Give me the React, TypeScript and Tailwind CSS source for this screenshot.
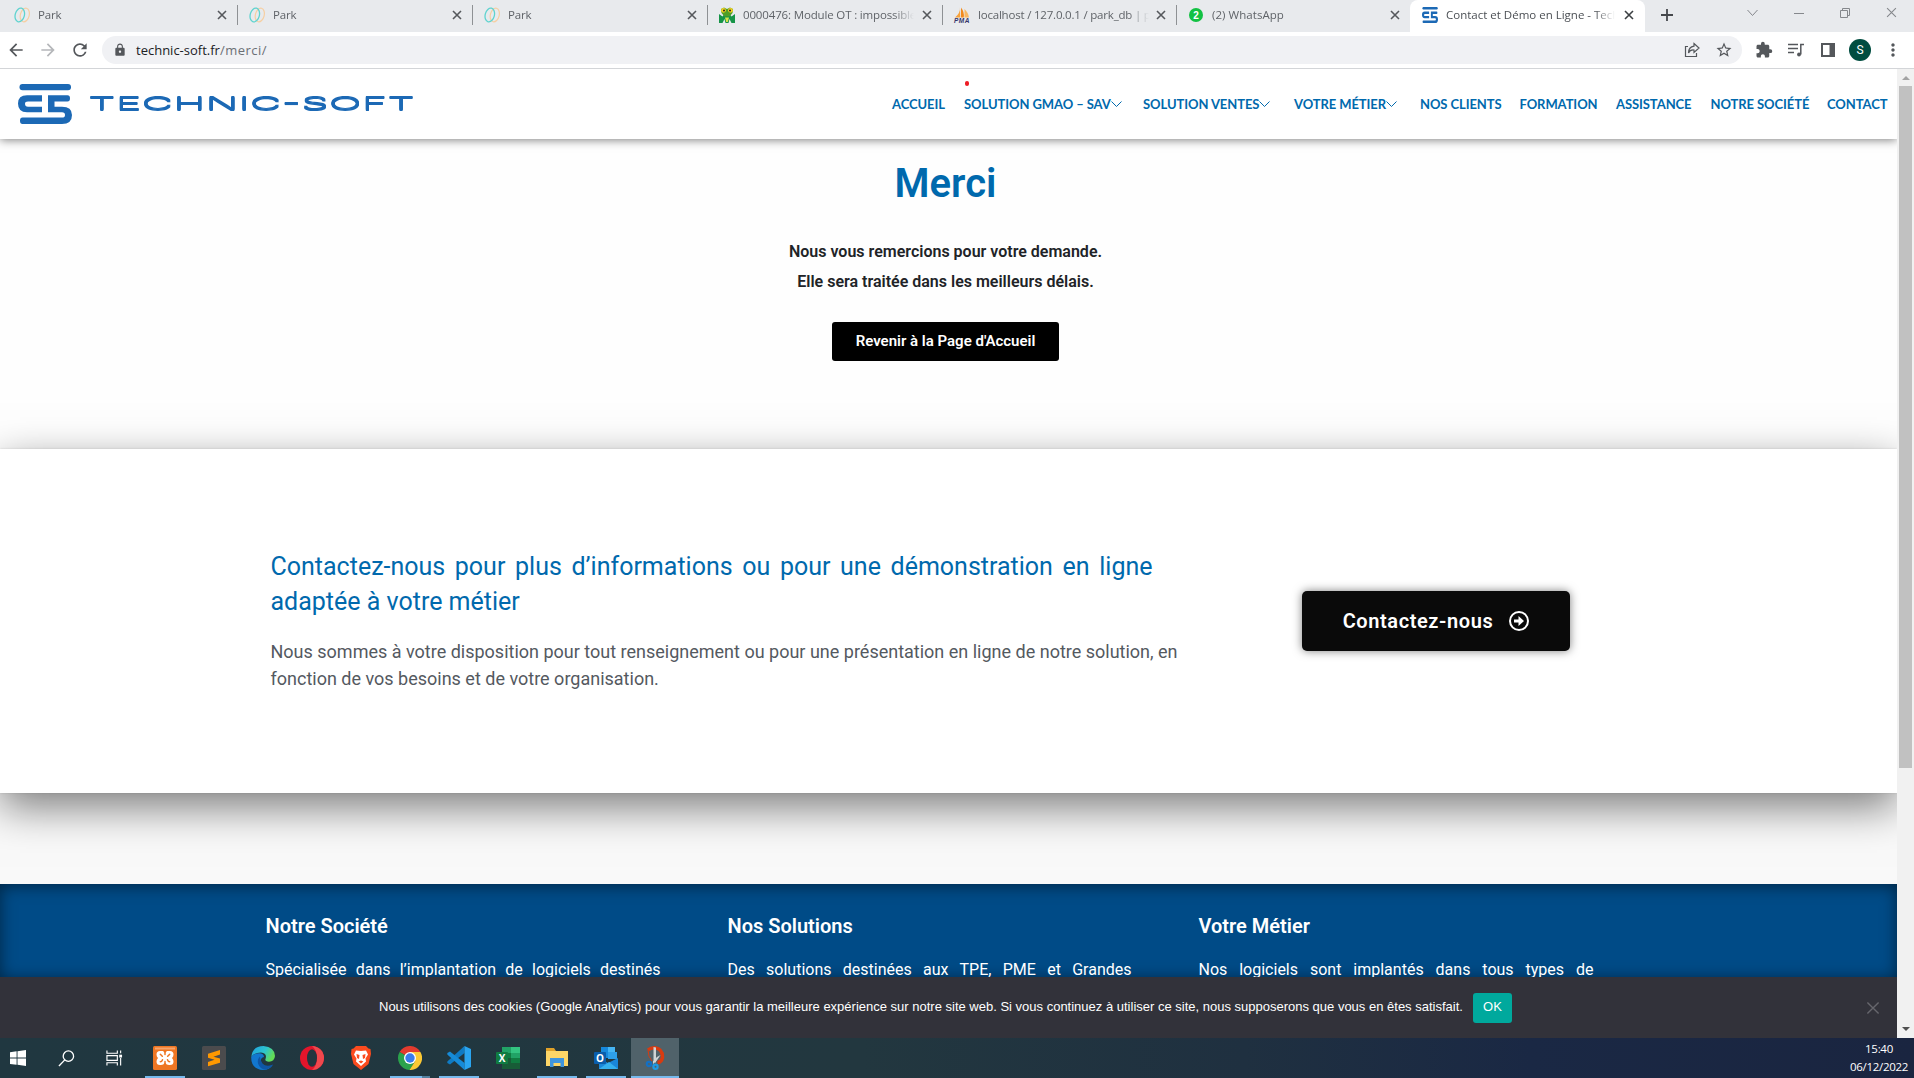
import React from "react";
import { MdArrowBack, MdArrowForward, MdRefresh, MdLock, MdStarOutline, MdExtension, MdMoreVert } from "react-icons/md";

const roboto = "font-[Roboto,sans-serif]";

function X({ className = "" }: { className?: string }) {
  return (
    <svg className={className} viewBox="0 0 10 10" fill="none" stroke="currentColor">
      <path d="M1 1l8 8M9 1l-8 8" />
    </svg>
  );
}

function Mark({ className = "", color = "#1c69b5" }: { className?: string; color?: string }) {
  return (
    <svg className={className} viewBox="0 0 54 40" preserveAspectRatio="none" fill={color}>
      <rect x="1.5" y="0" width="51.5" height="6.3" rx="3" />
      <path d="M24 11.2H9Q0 11.2 0 19.5Q0 28.200 9 28.200H24V22.700H10Q7 22.700 7 19.700Q7 17.400 10 17.400H24Z" />
      <path d="M30 11.200H49.500Q52 11.200 52 14.200Q52 17.400 49.500 17.400H36.500V22.700H44Q54 22.700 54 31Q54 40 44 40H4.500Q2 40 2 36.800Q2 33.600 4.500 33.600H44Q47 33.600 47 31Q47 28.200 44 28.200H30Z" />
    </svg>
  );
}

function ParkIcon() {
  return (
    <svg viewBox="0 0 16 16" className="size-4" fill="none">
      <ellipse cx="10.800" cy="8" rx="4.400" ry="7" transform="rotate(14 10.800 8)" stroke="#f6cfa2" strokeWidth="1.200" />
      <ellipse cx="5.800" cy="8" rx="4.600" ry="7" transform="rotate(14 5.800 8)" stroke="#5fd3cf" strokeWidth="1.300" />
    </svg>
  );
}

function MantisIcon() {
  return (
    <svg viewBox="0 0 16 16" className="size-4">
      <path d="M0 7l3.500 2.500L5 7.500h6l1.500 2L16 7v9h-3.500l-2-4-1 4h-3l-1-4-2 4H0Z" fill="#159447" />
      <path d="M2 2l3-1.500 3 1.500 3-1.500L14 2l-.5 4-3 3.500h-5L2.500 6Z" fill="#4f9e26" />
      <circle cx="4.500" cy="3.300" r="2.400" fill="#f4d21f" />
      <circle cx="11.500" cy="3.300" r="2.400" fill="#f4d21f" />
      <circle cx="5" cy="3.500" r="1" fill="#222" />
      <circle cx="11" cy="3.500" r="1" fill="#222" />
      <path d="M6 10.500h4L8.800 15H7.200Z" fill="#d8e34a" />
    </svg>
  );
}

function PmaIcon() {
  return (
    <svg viewBox="0 0 16 16" className="size-4 overflow-visible">
      <path d="M6 0Q6.500 6 1 10.500H6Z" fill="#f7a23b" />
      <path d="M7 .5Q10.500 5 9.800 10.500H6.800Z" fill="#f28a1c" />
      <path d="M10.500 2Q14.500 6 15 10.500h-4.500Z" fill="#f9b862" />
      <text x="0" y="15.800" fontSize="6.500" fontWeight="700" fontStyle="italic" fontFamily="Liberation Sans" fill="#35356b" textLength="15.500">PMA</text>
    </svg>
  );
}

function WhatsIcon() {
  return (
    <span className="flex h-[14px] w-[14px] items-center justify-center rounded-full bg-[#12c143] font-['Liberation_Sans',sans-serif] text-[10px] font-bold text-white">2</span>
  );
}

const tabs = [
  { t: "Park", i: <ParkIcon />, w: "w-[238px]" },
  { t: "Park", i: <ParkIcon />, w: "w-[235px]" },
  { t: "Park", i: <ParkIcon />, w: "w-[235px]" },
  { t: "0000476: Module OT : impossible", i: <MantisIcon />, w: "w-[235px]" },
  { t: "localhost / 127.0.0.1 / park_db | p", i: <PmaIcon />, w: "w-[234px]" },
  { t: "(2) WhatsApp", i: <WhatsIcon />, w: "w-[233px]" },
];

function TabBar() {
  return (
    <div className="flex h-8 bg-[#e8eaed] font-['Open_Sans',sans-serif] text-[11.5px] text-[#5f6368]">
      {tabs.map((tab, n) => (
        <div key={n} className={`flex h-[30px] shrink-0 items-center ${n === 0 ? "pl-[14px]" : "pl-[11px]"} ${tab.w}`}>
          <span className="flex w-4 justify-center">{tab.i}</span>
          <span className={`ml-2 w-[171px] overflow-hidden whitespace-nowrap [mask-image:linear-gradient(to_right,#000_88%,transparent)] ${n === 4 ? "tracking-[-0.2px]" : n === 5 ? "tracking-[0.05px]" : "tracking-[-0.15px]"}`}>{tab.t}</span>
          <X className={`size-[10px] stroke-[1.6] text-[#55585c] ${n > 3 ? "ml-[7px]" : "ml-[8px]"}`} />
          <span className={`ml-auto h-5 w-px ${n < 5 ? "bg-[#8e9194]" : ""}`} />
        </div>
      ))}
      <div className="flex w-[235px] shrink-0 items-center rounded-t-[8px] bg-white pb-[2px] pl-[12px]">
        <Mark className="h-4 w-4" />
        <span className="ml-2 w-[169px] overflow-hidden whitespace-nowrap text-[#4b4f54] [mask-image:linear-gradient(to_right,#000_88%,transparent)]">Contact et Démo en Ligne - Technic</span>
        <X className="ml-[9px] size-[10px] stroke-[1.6] text-[#3c4043]" />
      </div>
      <svg className="ml-[15px] mt-[8px] size-[14px]" viewBox="0 0 14 14" stroke="#45484c" strokeWidth="1.800"><path d="M7 1v12M1 7h12" /></svg>
      <div className="ml-auto flex h-[25px] items-center text-[#85888c]">
        <svg className="mr-[36px] h-[10px] w-[11px]" viewBox="0 0 11 10" fill="none" stroke="currentColor"><path d="M.5 2l5 5.500 5-5.500" /></svg>
        <svg className="mr-[36px] h-[10px] w-[10px]" viewBox="0 0 10 10" stroke="currentColor"><path d="M0 5.500h10" /></svg>
        <svg className="mr-[36px] h-[10px] w-[10px]" viewBox="0 0 10 10" fill="none" stroke="currentColor"><path d="M.5 2.500h7v7h-7zM2.500 2.500v-2h7v7h-2" /></svg>
        <X className="mr-[17px] size-[11px]" />
      </div>
    </div>
  );
}

function Toolbar() {
  return (
    <div className="flex h-[37px] items-center border-b border-[#d3d5d8] bg-white text-[#54575b]">
      <MdArrowBack className="ml-[6px] size-5" />
      <MdArrowForward className="ml-3 size-5 text-[#b5b7ba]" />
      <MdRefresh className="ml-3 size-5" />
      <div className="ml-[12px] flex h-7 w-[1640px] items-center rounded-full bg-[#f0f1f4] font-['Open_Sans',sans-serif] text-[13px]">
        <MdLock className="ml-[11px] size-[14px]" />
        <span className="ml-[9px] pt-px tracking-[0.5px] text-[#6b6f74]"><span className="tracking-[0px] text-[#202124]">technic-soft.fr</span>/merci/</span>
        <svg className="ml-auto mr-[15px] size-4" viewBox="0 0 16 16" fill="none" stroke="currentColor" strokeWidth="1.200">
          <path d="M4 4.500H1.500v10h11V11" /><path d="M10 1.500l5 4.500-5 4.500V8Q6 7.500 4.500 11Q4.500 5 10 4.200Z" />
        </svg>
        <MdStarOutline className="mr-[9px] size-[18px]" />
      </div>
      <MdExtension className="ml-[13px] size-[18px]" />
      <svg className="ml-[15px] h-[14px] w-[16px]" viewBox="0 0 16 14" fill="none" stroke="currentColor" strokeWidth="1.500">
        <path d="M0 1.500h10M0 5.500h10M0 9.500h6M12.800 11.500V1.500H16" /><circle cx="11" cy="11.500" r="1.900" fill="currentColor" stroke="none" />
      </svg>
      <svg className="ml-[17px] h-[14px] w-[14px]" viewBox="0 0 14 14" fill="none" stroke="currentColor" strokeWidth="2">
        <path d="M1 1h12v12H1z" /><path d="M8.500 1h4.500v12H8.500z" fill="currentColor" stroke="none" />
      </svg>
      <span className="ml-[14px] flex size-[22px] items-center justify-center rounded-full bg-[#004d40] font-[Roboto,sans-serif] text-[12px] text-white">S</span>
      <MdMoreVert className="ml-[12px] size-5" />
    </div>
  );
}

const nav = [
  { t: "ACCUEIL", w: "w-[72px]" },
  { t: "SOLUTION GMAO – SAV", w: "w-[179px]", c: true },
  { t: "SOLUTION VENTES", w: "w-[151px]", c: true },
  { t: "VOTRE MÉTIER", w: "w-[126px]", c: true },
  { t: "NOS CLIENTS", w: "w-[99.500px]" },
  { t: "FORMATION", w: "w-[96.500px]" },
  { t: "ASSISTANCE", w: "w-[94.500px]" },
  { t: "NOTRE SOCIÉTÉ", w: "w-[116.500px]" },
  { t: "CONTACT", w: "w-[70px]" },
];

function Header() {
  return (
    <header className="relative z-20 flex h-[70px] shrink-0 items-center bg-white shadow-[0_1px_9px_rgba(0,0,0,0.5)]">
      <Mark className="ml-[18px] h-[40px] w-[54px]" />
      <svg className="ml-[18px] h-[24px] w-[324px] overflow-visible [filter:drop-shadow(0_1px_0_#1c69b5)_drop-shadow(0_-1px_0_#1c69b5)]" viewBox="0 0 324 24">
        <text x="-2" y="18" fontFamily="Inter, sans-serif" fontWeight="300" fontSize="17.500" fill="#1c69b5" textLength="327" lengthAdjust="spacingAndGlyphs">TECHNIC-SOFT</text>
      </svg>
      <nav className="ml-auto flex whitespace-nowrap font-[Lato,sans-serif] text-[13px] font-bold leading-[20px] tracking-[-0.08px] text-[#0069ad]">
        {nav.map((n) => (
          <div key={n.t} className={`flex shrink-0 items-center ${n.w}`}>
            {n.t}
            {n.c && <svg className="h-[6px] w-[11px]" viewBox="0 0 11 6" fill="none" stroke="#0069ad"><path d="M.5.500l5 5 5-5" /></svg>}
          </div>
        ))}
      </nav>
      <span className="absolute left-[965px] top-[12px] h-[5px] w-1 rounded-full bg-[#ee1c25]" />
    </header>
  );
}

function Thanks() {
  return (
    <section className={`flex h-[310px] shrink-0 flex-col items-center bg-[#fefefe] pr-[6px] text-[#212327] ${roboto}`}>
      <h1 className="mt-[21px] text-[40px] font-semibold leading-[48px] text-[#0069ad]">Merci</h1>
      <div className="mt-[29px] text-center text-[16px] font-semibold leading-[30px]">
        <p>Nous vous remercions pour votre demande.</p>
        <p>Elle sera traitée dans les meilleurs délais.</p>
      </div>
      <button className="mt-[25px] h-[39px] w-[227px] rounded-[3px] bg-black text-[15px] font-semibold text-white">Revenir à la Page d'Accueil</button>
    </section>
  );
}

function Contact() {
  return (
    <section className={`relative z-10 flex h-[344px] shrink-0 bg-white pl-[270.500px] shadow-[0_14px_40px_rgba(0,0,0,0.5),0_0_2px_rgba(0,0,0,0.12)] ${roboto}`}>
      <div className="w-[912px] pt-[100px]">
        <h2 className="w-[882px] text-justify text-[25px] leading-[35px] text-[#0069ad]">Contactez-nous pour plus d’informations ou pour une démonstration en ligne adaptée à votre métier</h2>
        <p className="mt-[19px] text-[18px] leading-[27px] text-[#54595f]">Nous sommes à votre disposition pour tout renseignement ou pour une présentation en ligne de notre solution, en fonction de vos besoins et de votre organisation.</p>
      </div>
      <button className="ml-[119.500px] mt-[142px] flex h-[60px] w-[268px] items-center justify-center gap-4 rounded-[5px] bg-[#0a0a0a] text-[20px] font-semibold tracking-[0.6px] text-white shadow-[0_0_10px_rgba(0,0,0,0.5)]">
        Contactez-nous
        <svg className="size-[20px]" viewBox="0 0 20 20" fill="none" stroke="white" strokeWidth="2"><circle cx="10" cy="10" r="9" /><path d="M5 8.500h4.500V5l5.500 5-5.500 5v-3.500H5z" fill="white" stroke="none" /></svg>
      </button>
    </section>
  );
}

function FooterCol({ title, text, w }: { title: string; text: string; w: string }) {
  return (
    <div className={`shrink-0 ${w}`}>
      <h3 className="text-[20px] font-semibold leading-6">{title}</h3>
      <p className="mt-[20px] text-[16px] leading-6 [text-align-last:justify]">{text}</p>
    </div>
  );
}

function Scrollbar() {
  return (
    <div className="flex w-[17px] shrink-0 flex-col items-center bg-[#f1f1f1]">
      <svg className="mt-[7px] h-[4px] w-[8px]" viewBox="0 0 8 4"><path d="M0 4l4-4 4 4z" fill="#a3a3a3" /></svg>
      <div className="mt-[6px] h-[682px] w-[13px] bg-[#c1c1c1]" />
      <svg className="mb-[7px] mt-auto h-[4px] w-[8px]" viewBox="0 0 8 4"><path d="M0 0l4 4 4-4z" fill="#505050" /></svg>
    </div>
  );
}

const Win = () => (
  <svg viewBox="0 0 16 16" className="size-4" fill="white"><path d="M0 2.200l6.600-.9v6.300H0zM7.500 1.200L16 0v7.600H7.500zM0 8.500h6.600v6.300L0 13.900zM7.500 8.500H16V16l-8.500-1.200z" /></svg>
);
const Search = () => (
  <svg viewBox="0 0 18 18" className="size-[17px]" fill="none" stroke="white" strokeWidth="1.400"><circle cx="11" cy="6.500" r="5.500" /><path d="M7.200 10.500L1 17" /></svg>
);
const TaskView = () => (
  <svg viewBox="0 0 18 16" className="h-4 w-[17px]" fill="none" stroke="white" strokeWidth="1.200"><path d="M1 0v3h11V0M1 16v-3h11v3M1 5.500h11v5H1zM15.500 0v3M15.500 8v8" /><path d="M14 4.500h3v3h-3z" fill="white" stroke="none" /></svg>
);
const Xampp = () => (
  <svg viewBox="0 0 24 24" className="size-6">
    <rect width="24" height="24" rx="1.500" fill="#ee7623" />
    <path d="M2 1.500h20v2H2z" fill="#f6a56c" />
    <path d="M7 5h3l2 2 2-2h3q3.500 0 3.500 3.500 0 2-1.500 3.500 1.500 1.500 1.500 3.500Q20.500 19 17 19h-1q-2.500 0-4-2.500Q10.500 19 8 19H7q-3.500 0-3.500-3.500 0-2 1.500-3.500-1.500-1.500-1.500-3.500Q3.500 5 7 5Z" fill="white" />
    <path d="M12 4.500v4M12 15.500v4M7.300 8.300l2 2M16.700 8.300l-2 2M7.300 15.700q1.500 0 2.200-2M16.700 15.700q-1.500 0-2.200-2" stroke="#ee7623" strokeWidth="1.500" strokeLinecap="round" fill="none" />
  </svg>
);
const Sublime = () => (
  <svg viewBox="0 0 24 24" className="size-6"><rect width="24" height="24" rx="1.500" fill="#4b4b4d" /><path d="M18 4v4.500l-6.500 2.200 6.500 1.900v4.100L6 20.300v-4.300l6.500-2.200L6 11.800V7.700z" fill="#ff9800" /></svg>
);
const Edge = () => (
  <svg viewBox="0 0 24 24" className="size-6">
    <defs><linearGradient id="eg" x1="0" y1="0" x2="1" y2="0.400"><stop offset="0" stopColor="#1f9fe0" /><stop offset="0.600" stopColor="#2cc4cf" /><stop offset="1" stopColor="#63dc56" /></linearGradient></defs>
    <path d="M.3 11Q1.500 0 12.500 0Q23.500.800 24 10Q23.500 15.500 18 15.700Q13.500 15.500 14.500 13Q16.500 7 10 6.500Q3 6.500.300 11Z" fill="url(#eg)" />
    <path d="M.2 11Q3.500 6.800 9 7.200Q13 8 13 11Q9 12 10 16.500Q12.500 21 19 20Q21 19.500 22 18.500Q18.500 24 12 24Q0 23 .200 11Z" fill="#1277cf" />
    <path d="M9 10.500Q6 13 7 17.500Q9 23.500 15 23.500Q20 22 22 18.500Q15 21.500 11.500 17.500Q9 14 9 10.500Z" fill="#0f56a5" />
  </svg>
);
const Opera = () => (
  <svg viewBox="0 0 24 24" className="size-6"><circle cx="12" cy="12" r="12" fill="#e3152b" /><path d="M12 0a12 12 0 010 24Q17 20 17 12T12 0Z" fill="#f0484d" /><ellipse cx="12" cy="12" rx="5" ry="8.700" fill="#22363f" /></svg>
);
const Brave = () => (
  <svg viewBox="0 0 24 24" className="size-6"><path d="M7 0h10l2.500 2.500 2 .500L22 8l-2.500 10L12 24l-7.500-6L2 8l.500-5 2-.500z" fill="#fb4b1e" /><path d="M7 4.500l5 .500 5-.500 2 4-2.500 4 .500 3L12 20l-5-4.500.500-3L5 8.500z" fill="white" /><path d="M7.500 8l3 1-.500 4-2-1zM16.500 8l-3 1 .500 4 2-1zM9.500 15.500L12 14.500l2.500 1L12 17.500z" fill="#fb4b1e" /></svg>
);
const Chrome = () => (
  <svg viewBox="0 0 24 24" className="size-6"><path d="M12 12L1.600 6A12 12 0 0122.400 6Z" fill="#e33b2e" /><path d="M12 12L1.600 6A12 12 0 0011.500 24L17.200 15Z" fill="#2ba24c" /><path d="M12 6H22.400A12 12 0 0111.500 24L17.200 15Z" fill="#fcc934" /><circle cx="12" cy="12" r="6" fill="white" /><circle cx="12" cy="12" r="4.700" fill="#3a7cec" /></svg>
);
const Vscode = () => (
  <svg viewBox="0 0 24 24" className="size-6"><path d="M17.500 0v7L3 18.500.300 17v-1.500z" fill="#0f7bc4" /><path d="M17.500 24v-7L3 5.500.300 7v1.500z" fill="#168bd8" /><path d="M17.500 0L24 3v18l-6.500 3z" fill="#2aa5f0" /></svg>
);
const Excel = () => (
  <svg viewBox="0 0 24 24" className="size-6"><path d="M6 1h9v22H6z" fill="#21a366" /><path d="M15 1h9v6h-9z" fill="#33c481" /><path d="M6 7h9v5H6z" fill="#107c41" /><path d="M15 7h9v5h-9z" fill="#21a366" /><path d="M6 12h18v11H6z" fill="#185c37" /><path d="M15 12h9v5h-9z" fill="#107c41" /><rect y="6" width="12" height="12" rx="1" fill="#107c41" /><text x="6" y="15.500" fontSize="10" fontWeight="700" fontFamily="Open Sans" fill="white" textAnchor="middle">X</text></svg>
);
const Folder = () => (
  <svg viewBox="0 0 24 24" className="size-6"><path d="M1 2h8l2 3H1z" fill="#dfa129" /><path d="M1 5h22v15H1z" fill="#fdd667" /><path d="M5 12h14v9h-3.500v-4h-7v4H5z" fill="#3f95dd" /></svg>
);
const Outlook = () => (
  <svg viewBox="0 0 24 24" className="size-6"><path d="M7 1h14v11H7z" fill="#1689dc" /><path d="M14 1h7v5h-7z" fill="#45b5f3" /><path d="M14 6h9v7h-9z" fill="#2ea0ea" /><path d="M5 12l9 5 10-5v11H5z" fill="#1a86d9" /><path d="M5 23l10-7 9 7z" fill="#35b0ee" /><rect y="6" width="12" height="12" rx="1" fill="#0a5dab" /><text x="6" y="15.600" fontSize="10" fontWeight="700" fontFamily="Open Sans" fill="white" textAnchor="middle">O</text></svg>
);
const Snip = () => (
  <svg viewBox="0 0 24 24" className="size-6" fill="none"><path d="M5 4Q8 1.500 12 1.800Q19.500 3 19.500 11Q19 16 14.500 16.500" stroke="#d83b10" strokeWidth="3.500" /><path d="M5 4Q5 11 9 15" stroke="#d83b10" strokeWidth="1" /><path d="M10.500 1L13 1.500v15h-2.500zM17.500 9l-4 6-3.500 3V15l4-4z" fill="#cfd4d6" /><circle cx="6" cy="18" r="2.200" stroke="#1470c4" strokeWidth="2.200" /><circle cx="12.500" cy="20.800" r="2.100" stroke="#1e9be6" strokeWidth="2.200" /></svg>
);

const taskIcons = [
  { i: <Xampp />, u: "bg-[#76b9ed]" },
  { i: <Sublime />, u: "" },
  { i: <Edge />, u: "" },
  { i: <Opera />, u: "" },
  { i: <Brave />, u: "" },
  { i: <Chrome />, u: "bg-[linear-gradient(90deg,#76b9ed_80%,#53809f_80%)]" },
  { i: <Vscode />, u: "bg-[#76b9ed]" },
  { i: <Excel />, u: "" },
  { i: <Folder />, u: "bg-[#76b9ed]" },
  { i: <Outlook />, u: "bg-[#76b9ed]" },
];

function Taskbar() {
  return (
    <div className="flex h-10 items-stretch bg-[linear-gradient(90deg,#203740_0%,#22373f_45%,#1f3040_65%,#1a2844_80%,#1a2540_100%)] text-white">
      <div className="flex w-[36px] items-center justify-center"><Win /></div>
      <div className="flex w-[60px] items-center justify-center"><Search /></div>
      <div className="flex w-[36px] items-center justify-center"><TaskView /></div>
      <div className="ml-[8.500px] flex">
        {taskIcons.map((t, n) => (
          <div key={n} className="flex w-[49px] flex-col items-center pt-2">
            {t.i}
            <span className={`mt-auto h-[2px] w-10 ${t.u}`} />
          </div>
        ))}
      </div>
      <div className="flex w-12 flex-col items-center bg-[#50626a] pt-2"><Snip /><span className="mt-auto h-[2px] w-full bg-[#76b9ed]" /></div>
      <div className="ml-auto w-[70px] pt-[2px] text-center font-['Open_Sans',sans-serif] text-[11.5px] leading-[18px] tracking-[-0.3px]">
        <p>15:40</p>
        <p>06/12/2022</p>
      </div>
    </div>
  );
}

export default function App() {
  return (
    <div className="flex h-[1078px] w-[1914px] flex-col overflow-hidden">
      <TabBar />
      <Toolbar />
      <div className="flex h-[969px]">
        <main className="flex w-[1897px] flex-col overflow-hidden bg-[#f9f9f9]">
          <Header />
          <Thanks />
          <Contact />
          <footer className={`mt-[91px] flex h-[93px] shrink-0 overflow-hidden bg-[#004b87] pl-[265.500px] pt-[30px] text-white shadow-[inset_0_2px_16px_rgba(0,0,0,0.5)] ${roboto}`}>
            <FooterCol title="Notre Société" text="Spécialisée dans l’implantation de logiciels destinés" w="w-[395px] mr-[67px]" />
            <FooterCol title="Nos Solutions" text="Des solutions destinées aux TPE, PME et Grandes" w="w-[404px] mr-[67px]" />
            <FooterCol title="Votre Métier" text="Nos logiciels sont implantés dans tous types de" w="w-[395px]" />
          </footer>
          <div className="relative z-10 flex h-[61px] shrink-0 items-center bg-[#32323a] pl-[379px] font-['Liberation_Sans',sans-serif] text-[13px] text-white">
            <span className="w-[1083px] shrink-0 whitespace-nowrap pb-[2px]">Nous utilisons des cookies (Google Analytics) pour vous garantir la meilleure expérience sur notre site web. Si vous continuez à utiliser ce site, nous supposerons que vous en êtes satisfait.</span>
            <button className="ml-[11px] h-[30px] w-[39px] rounded-[3px] bg-[#00a99d] pb-[2px]">OK</button>
            <X className="ml-auto mr-[17px] size-[14px] text-[#66666c]" />
          </div>
        </main>
        <Scrollbar />
      </div>
      <Taskbar />
    </div>
  );
}
